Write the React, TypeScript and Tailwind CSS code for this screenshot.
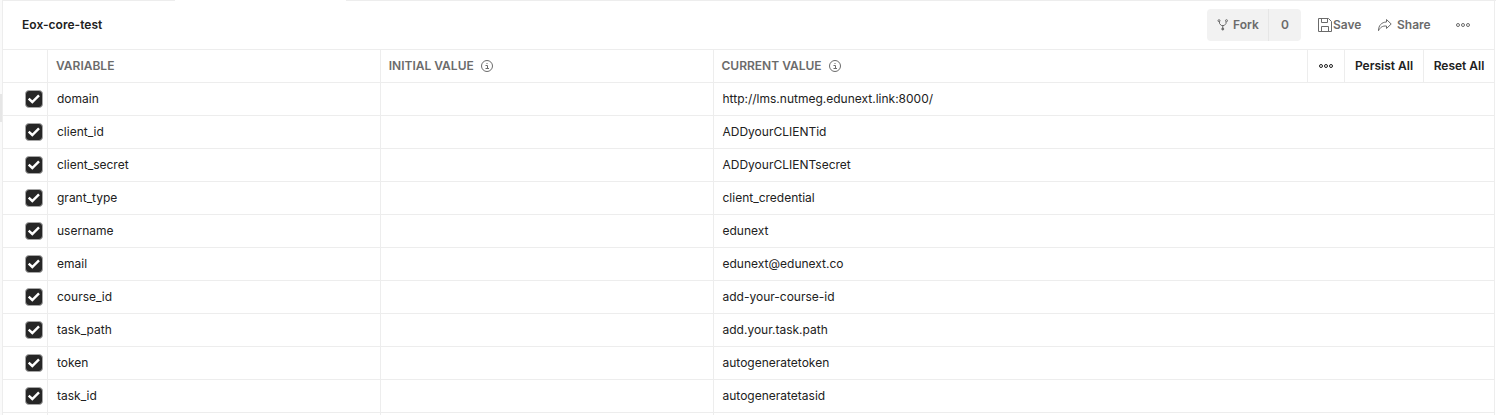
import React from "react";

const rows: [string, string][] = [
  ["domain", "http://lms.nutmeg.edunext.link:8000/"],
  ["client_id", "ADDyourCLIENTid"],
  ["client_secret", "ADDyourCLIENTsecret"],
  ["grant_type", "client_credential"],
  ["username", "edunext"],
  ["email", "edunext@edunext.co"],
  ["course_id", "add-your-course-id"],
  ["task_path", "add.your.task.path"],
  ["token", "autogeneratetoken"],
  ["task_id", "autogeneratetasid"],
];

function Info() {
  return (
    <svg className="ml-[7px] h-3 w-3" viewBox="0 0 12 12" fill="none" stroke="#6b6b6b">
      <circle cx="6" cy="6" r="5.5" />
      <path d="M4.5 5.5H6.5V8.5M4.5 8.5H8M5.5 3.5H6.5" />
    </svg>
  );
}

function Dots() {
  return (
    <svg className="h-4 w-4" viewBox="0 0 16 16" fill="none" stroke="currentColor">
      <circle cx="3" cy="8" r="1.5" />
      <circle cx="8" cy="8" r="1.5" />
      <circle cx="13" cy="8" r="1.5" />
    </svg>
  );
}

function ForkIcon() {
  return (
    <svg className="h-4 w-4" viewBox="0 0 16 16" fill="none" stroke="currentColor">
      <circle cx="4" cy="3.7" r="1" />
      <circle cx="11.5" cy="3.7" r="1" />
      <path d="M4.5 4.7V6.5L6.3 8.5H9.2L11 6.5V4.7M7.75 8.5V11.5" />
      <circle cx="7.75" cy="12" r="1" fill="currentColor" />
    </svg>
  );
}

function SaveIcon() {
  return (
    <svg className="h-4 w-4" viewBox="0 0 16 16" fill="none" stroke="currentColor">
      <path d="M1.5 1.5H11.5L14.5 4.5V14.5H1.5V1.5ZM4.5 1.5V5.5H10.5V1.5M4.5 14.5V9.5H11.5V14.5" />
    </svg>
  );
}

function ShareIcon() {
  return (
    <svg className="h-4 w-4" viewBox="0 0 16 16" fill="none" stroke="currentColor">
      <path d="M9.5 2.5L14.2 7L9.5 11.5V9C5.5 8.8 3.5 10 1.5 13.7C1.5 8.5 4.5 5.2 9.5 5V2.5Z" />
    </svg>
  );
}

function Checkbox() {
  return (
    <svg className="h-[18px] w-[18px]" viewBox="0 0 18 18" fill="none">
      <rect x="0.5" y="0.5" width="17" height="17" rx="3.5" fill="#262626" stroke="#a6a6a6" />
      <path d="M3.7 8.7L7.3 12L14 5.3" stroke="#fff" strokeWidth="2.4" />
    </svg>
  );
}

const cell = "flex items-center border-r border-[#ededed]";

export default function App() {
  return (
    <div className="flex h-[415px] w-full overflow-hidden bg-white font-['Inter',sans-serif] text-xs text-[#212121]">
      <div className="w-[2px] shrink-0 bg-[#fafafa] pt-[94px]">
        <div className="h-7 bg-[#e6e6e6]" />
      </div>
      <div className="flex min-w-0 flex-1 flex-col">
        <div className="flex h-px shrink-0 justify-between">
          <div className="w-[173px] bg-[#ededed]" />
          <div className="w-[1150px] bg-[#ededed]" />
        </div>
        <div className="mr-px flex min-h-0 flex-1 flex-col border-x border-[#ededed]">
          <header className="flex h-[49px] shrink-0 items-center border-b border-[#ededed] pl-[19px] font-semibold">
            <h1 className="flex-1 tracking-[0.03px]">Eox-core-test</h1>
            <div className="flex items-center text-[#6b6b6b]">
              <div className="flex h-8 w-[94px] overflow-hidden rounded-[4px] bg-[#f2f2f2]">
                <div className="flex w-[62px] items-center gap-[2px] border-r border-[#e6e6e6] pl-2">
                  <ForkIcon />
                  Fork
                </div>
                <div className="flex flex-1 items-center justify-center">0</div>
              </div>
              <div className="ml-4 flex w-[60px] items-center">
                <SaveIcon />
                Save
              </div>
              <div className="flex w-[78px] items-center gap-1">
                <ShareIcon />
                Share
              </div>
              <div className="w-[39px]"><Dots /></div>
            </div>
          </header>
          <div className="flex h-[33px] shrink-0 border-b border-[#ededed] font-semibold">
            <div className={`${cell} w-[45px]`} />
            <div className={`${cell} w-[333px] pl-2 text-[#6b6b6b]`}>VARIABLE</div>
            <div className={`${cell} w-[333px] pl-[7.75px] text-[#6b6b6b]`}>INITIAL VALUE<Info /></div>
            <div className={`${cell} flex-1 pl-[7.5px] text-[#6b6b6b]`}>CURRENT VALUE<Info /></div>
            <div className={`${cell} w-[37px] justify-center`}><Dots /></div>
            <div className={`${cell} w-[79px] justify-center`}>Persist All</div>
            <div className="flex w-[70px] items-center justify-center">Reset All</div>
          </div>
          {rows.map(([name, value]) => (
            <div key={name} className="flex h-[33px] shrink-0 border-b border-[#ededed]">
              <div className={`${cell} w-[45px] pl-[22px]`}><Checkbox /></div>
              <div className={`${cell} w-[333px] pl-[9px]`}>{name}</div>
              <div className={`${cell} w-[333px]`} />
              <div className="flex flex-1 items-center pl-[8.5px]">{value}</div>
            </div>
          ))}
          <div className="flex flex-1">
            <div className={`${cell} w-[45px]`} />
            <div className={`${cell} w-[333px]`} />
            <div className={`${cell} w-[333px]`} />
          </div>
        </div>
      </div>
    </div>
  );
}
